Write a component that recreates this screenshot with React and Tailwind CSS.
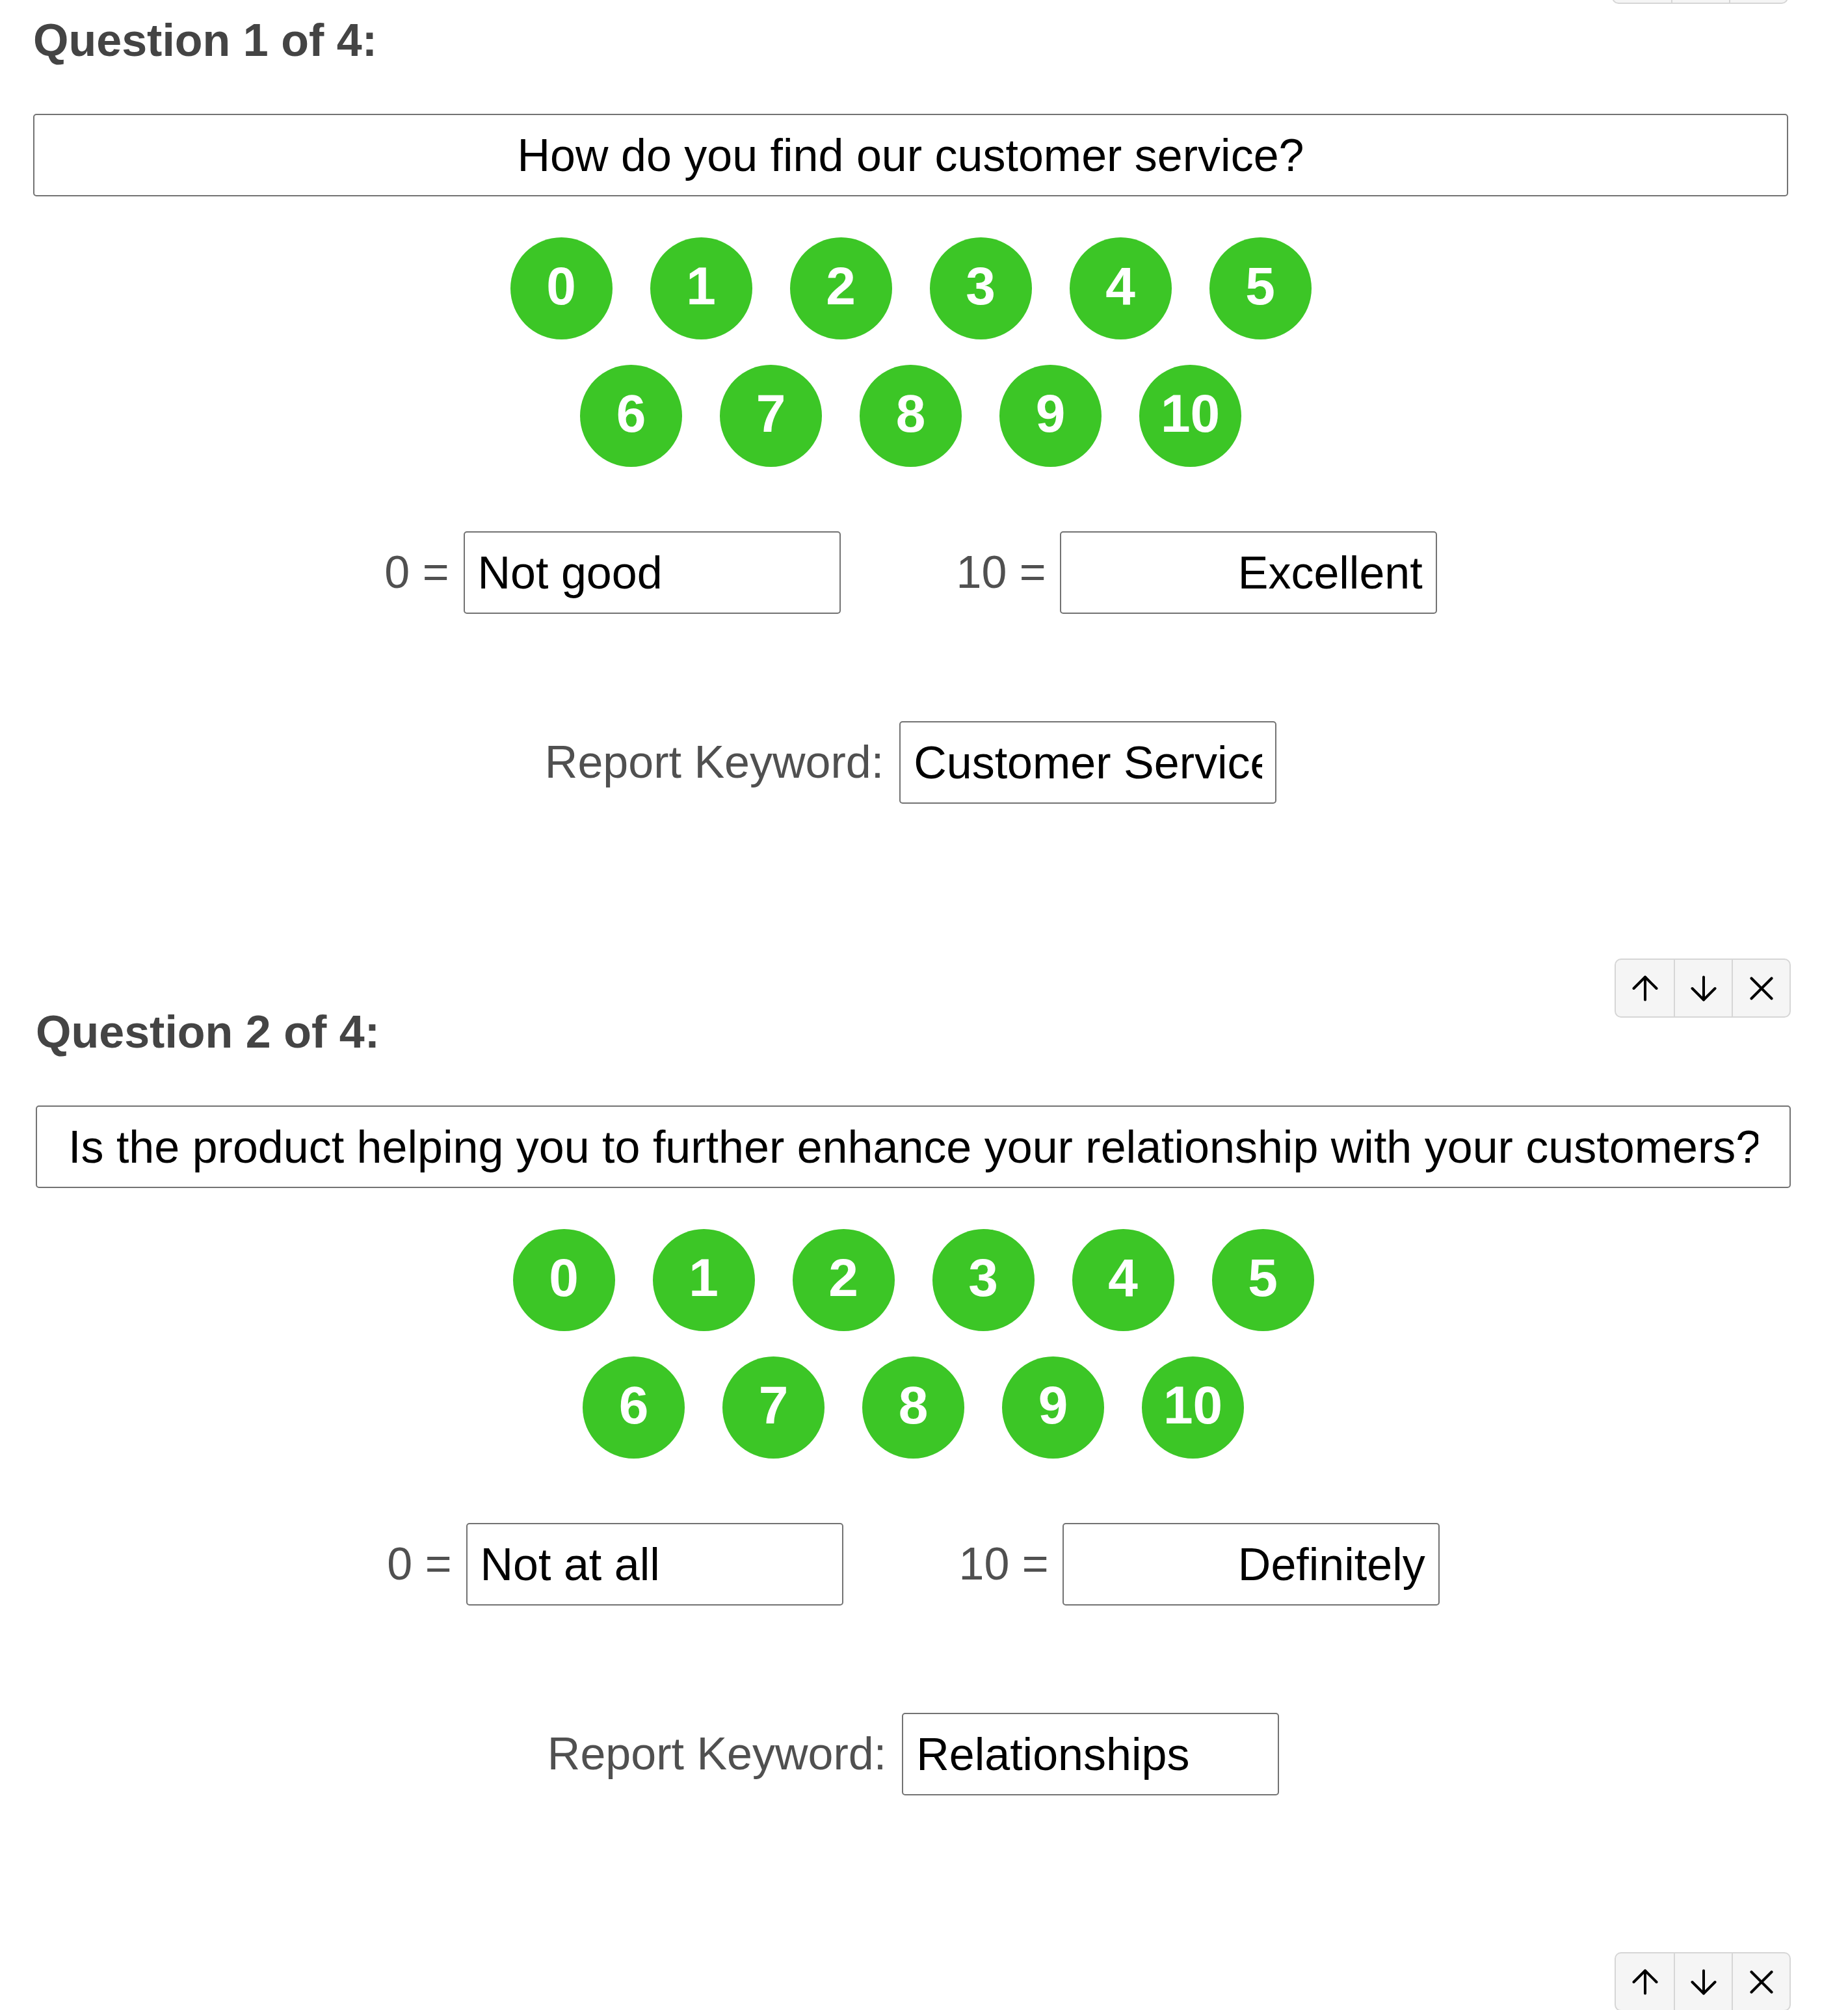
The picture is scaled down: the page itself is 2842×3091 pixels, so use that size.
import { ArrowUp, ArrowDown, X } from "lucide-react"

const questions = [
  {
    n: 1,
    text: "How do you find our customer service?",
    low: "Not good",
    high: "Excellent",
    keyword: "Customer Service",
    offset: "ml-[51px]",
    toolbarGap: "-mt-[85px]",
    headingGap: "mt-[16px]",
  },
  {
    n: 2,
    text: "Is the product helping you to further enhance your relationship with your customers?",
    low: "Not at all",
    high: "Definitely",
    keyword: "Relationships",
    offset: "ml-[55px]",
    toolbarGap: "mt-[238px]",
    headingGap: "-mt-[18px]",
  },
]

function Toolbar() {
  return (
    <div className="flex justify-end">
      <div className="flex h-[91px] overflow-hidden rounded-[10px] border-2 border-[#d6d6d6] bg-[#f5f5f5]">
        <button type="button" className="flex w-[89px] items-center justify-center text-black">
          <ArrowUp size={60} strokeWidth={1.6} />
        </button>
        <button type="button" className="flex w-[89px] items-center justify-center border-l-2 border-[#d6d6d6] text-black">
          <ArrowDown size={60} strokeWidth={1.6} />
        </button>
        <button type="button" className="flex w-[89px] items-center justify-center border-l-2 border-[#d6d6d6] text-black">
          <X size={62} strokeWidth={1.6} />
        </button>
      </div>
    </div>
  )
}

function TextBox({ value, className }) {
  return (
    <input
      readOnly
      value={value}
      className={`block h-[127px] rounded-[5px] border-2 border-[#737373] bg-white text-[70px] text-black outline-none ${className}`}
    />
  )
}

function Question({ q }) {
  return (
    <section className={`w-[2699px] ${q.offset}`}>
      {/* move / remove controls */}
      <div className={q.toolbarGap}>
        <Toolbar />
      </div>

      <h2 className={`text-[70px] font-bold leading-[80px] text-[#444444] ${q.headingGap}`}>
        Question {q.n} of 4:
      </h2>

      <TextBox value={q.text} className="mt-[73px] w-full px-[48px] text-center" />

      {/* score scale */}
      <div className="mx-auto mt-[63px] flex w-[1300px] flex-wrap justify-center gap-x-[58px] gap-y-[39px]">
        {Array.from({ length: 11 }, (_, i) => (
          <div
            key={i}
            className="flex size-[157px] items-center justify-center rounded-full bg-[#3cc626] pb-[8px] text-[82px] font-bold text-white"
          >
            {i}
          </div>
        ))}
      </div>

      {/* scale end labels */}
      <div className="mt-[99px] flex items-center justify-center gap-[178px] text-[70px] text-[#505050]">
        <div className="flex items-center gap-[22px]">
          <span>0 =</span>
          <TextBox value={q.low} className="w-[580px] px-[20px] text-left" />
        </div>
        <div className="flex items-center gap-[21px]">
          <span>10 =</span>
          <TextBox value={q.high} className="w-[580px] px-[20px] text-right" />
        </div>
      </div>

      <div className="mt-[165px] flex items-center justify-center gap-[24px] text-[70px] text-[#505050]">
        <span>Report Keyword:</span>
        <TextBox value={q.keyword} className="w-[580px] px-[20px] text-left" />
      </div>
    </section>
  )
}

export default function App() {
  return (
    <div className="min-h-[3091px] overflow-hidden bg-white font-['Liberation_Sans',Arial,sans-serif]">
      {questions.map((q) => (
        <Question key={q.n} q={q} />
      ))}
      <div className="ml-[55px] mt-[241px] w-[2699px]">
        <Toolbar />
      </div>
    </div>
  )
}
